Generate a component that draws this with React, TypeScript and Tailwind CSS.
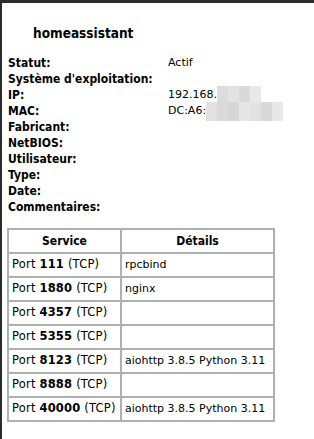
import type { ReactNode } from "react";

const INFO: { label: string; value?: ReactNode }[] = [
  { label: "Statut:", value: "Actif" },
  { label: "Système d'exploitation:" },
  { label: "IP:", value: <Masked text="192.168." cells={["#dcdcdc", "#e3e3e3", "#d9d9d9", "#e9e9e9"]} /> },
  { label: "MAC:", value: <Masked text="DC:A6:" cells={["#e1e1e1", "#dadada", "#d6d6d6", "#e6e6e6", "#e2e2e2", "#d9d9d9", "#e8e8e8"]} /> },
  { label: "Fabricant:" },
  { label: "NetBIOS:" },
  { label: "Utilisateur:" },
  { label: "Type:" },
  { label: "Date:" },
  { label: "Commentaires:" },
];

const PORTS: { port: string; details: string }[] = [
  { port: "111", details: "rpcbind" },
  { port: "1880", details: "nginx" },
  { port: "4357", details: "" },
  { port: "5355", details: "" },
  { port: "8123", details: "aiohttp 3.8.5 Python 3.11" },
  { port: "8888", details: "" },
  { port: "40000", details: "aiohttp 3.8.5 Python 3.11" },
];

// partially hidden address: readable prefix then a pixelated block
function Masked({ text, cells }: { text: string; cells: string[] }) {
  return (
    <span className="flex items-center">
      <span>{text}</span>
      <span className="flex h-[19px]">
        {cells.map((c, i) => (
          <span key={i} className="w-[11px] h-full" style={{ backgroundColor: c }} />
        ))}
      </span>
    </span>
  );
}

export default function App() {
  return (
    <div className="w-[314px] h-[439px] bg-[#2b2b2b] pt-[3px] pl-[2px] overflow-hidden">
      <div className="bg-white h-full text-black font-['DejaVu_Sans_Condensed','DejaVu_Sans',sans-serif]">
        <h1 className="pt-[21px] pl-[31px] text-[13.5px] font-bold leading-[18px]">homeassistant</h1>

        <div className="mt-[13px] pl-[6px] text-[12px] leading-[16px]">
          {INFO.map((row) => (
            <div key={row.label} className="flex h-[16px] items-center">
              <span className="w-[160px] font-bold whitespace-nowrap">{row.label}</span>
              <span className="whitespace-nowrap font-['DejaVu_Sans',sans-serif] text-[11px]">{row.value}</span>
            </div>
          ))}
        </div>

        <table className="mt-[13px] ml-[5px] border-collapse border-2 border-[#a3a3a3] text-[11px] font-['DejaVu_Sans',sans-serif]">
          <thead>
            <tr className="h-[24px]">
              <th className="w-[113px] border-2 border-[#b0b0b0] font-bold font-['DejaVu_Sans_Condensed','DejaVu_Sans',sans-serif] text-[12px]">Service</th>
              <th className="w-[153px] border-2 border-[#b0b0b0] font-bold font-['DejaVu_Sans_Condensed','DejaVu_Sans',sans-serif] text-[12px]">Détails</th>
            </tr>
          </thead>
          <tbody>
            {PORTS.map((p) => (
              <tr key={p.port} className="h-[24px]">
                <td className="border-2 border-[#b0b0b0] px-[3px] whitespace-nowrap text-[11.5px] tracking-[0.2px]">
                  Port <b>{p.port}</b> (TCP)
                </td>
                <td className="border-2 border-[#b0b0b0] px-[3px] whitespace-nowrap">{p.details}</td>
              </tr>
            ))}
          </tbody>
        </table>
      </div>
    </div>
  );
}
